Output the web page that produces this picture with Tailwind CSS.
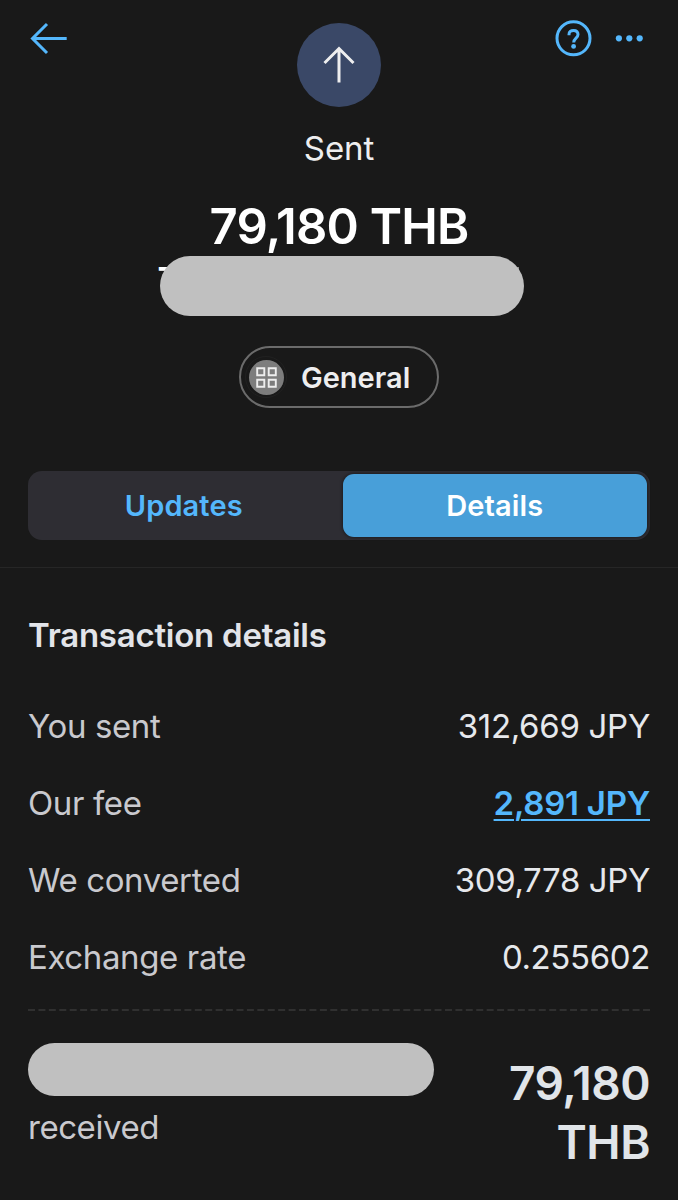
<!DOCTYPE html>
<html lang="en">
<head>
    <meta charset="UTF-8">
    <title>Transaction details</title>
    <script src="https://cdn.jsdelivr.net/npm/@tailwindcss/browser@4"></script>
</head>
<body class="bg-[#191919] font-['Inter',sans-serif]">
    <div class="relative w-[678px] h-[1200px] overflow-hidden flex flex-col">
        <!-- Header -->
        <header class="h-[107px] shrink-0 flex justify-between items-start px-7 pt-[18px]">
            <button class="w-[120px]">
                <svg class="block" width="42" height="40" viewBox="0 0 42 40" fill="none" stroke="#54b7fc" stroke-width="3">
                    <path d="M38.700 20.500H5M19 6L4.500 20.500L19 35"/>
                </svg>
            </button>
            <div class="mt-[5px] size-[84px] rounded-full bg-[#3a4867] flex items-center justify-center">
                <svg width="36" height="42" viewBox="0 0 36 42" fill="none" stroke="#eeeeef" stroke-width="3">
                    <path d="M18 38.500V5M3.500 19L18 4.500L32.500 19"/>
                </svg>
            </div>
            <div class="w-[120px] flex items-center justify-end">
                <svg width="96" height="40" viewBox="0 0 96 40" fill="none">
                    <circle cx="19.500" cy="20.300" r="16.500" stroke="#54b7fc" stroke-width="3"/>
                    <path d="M15 17.300V16.600C15 13.800 16.900 12.400 19.500 12.400C22.100 12.400 24 13.800 24 16.500C24 20.200 19.700 20.100 19.700 24.600" stroke="#54b7fc" stroke-width="3"/>
                    <circle cx="19.600" cy="28.400" r="2.400" fill="#54b7fc"/>
                    <g fill="#54b7fc">
                        <circle cx="64.900" cy="20.300" r="3.100"/>
                        <circle cx="75.300" cy="20.300" r="3.100"/>
                        <circle cx="85.700" cy="20.300" r="3.100"/>
                    </g>
                </svg>
            </div>
        </header>

        <!-- Summary -->
        <section class="flex flex-col items-center">
            <p class="mt-[21px] h-10 leading-10 text-[33px] tracking-[-0.1px] text-[#eeeeef]">Sent</p>
            <h1 class="mt-[29px] h-[59px] leading-[60px] text-[49px] font-semibold tracking-[-0.8px] text-white">79,180 THB</h1>
            <div class="relative h-[60px] w-[364px] ml-[5px]">
                <span class="absolute -left-[2px] top-[3px] leading-10 text-[33px] font-semibold text-white">T</span>
                <span class="absolute right-[5px] top-[11px] size-[3px] bg-[#8a8a8a]"></span>
                <div class="relative h-full rounded-full bg-[#c0c0c0]"></div>
            </div>
            <button class="mt-[30px] w-[200px] h-[62px] rounded-full border-2 border-[#6b6b6b] flex items-center pl-[4px]">
                <span class="size-[42px] rounded-full border border-[#212121] flex items-center justify-center">
                    <span class="size-[35px] rounded-full bg-[#7d7d7d] flex items-center justify-center">
                        <svg width="21" height="21" viewBox="0 0 21 21" fill="none" stroke="#eeeeee" stroke-width="1.900">
                            <path d="M1.200 1.200H8.300V8.300H1.200ZM12.700 1.200H19.800V8.300H12.700ZM1.200 12.700H8.300V19.800H1.200ZM12.700 12.700H19.800V19.800H12.700Z"/>
                        </svg>
                    </span>
                </span>
                <span class="ml-[14px] pt-[2px] text-[29px] leading-10 font-semibold text-[#eeeeef]">General</span>
            </button>
        </section>

        <!-- Tabs -->
        <nav class="mt-[63px] mx-7 h-[69px] shrink-0 rounded-[14px] bg-[#2e2d33] p-[3px] flex text-[29px] font-semibold tracking-[0.1px]">
            <button class="w-[311.5px] pt-px pr-[6px] text-[#54b7fc]">Updates</button>
            <button class="w-[304.5px] pt-px rounded-[11px] bg-[#489fd9] text-white shadow-[0_0_3px_1px_rgba(0,0,0,0.35)]">Details</button>
        </nav>

        <div class="mt-[27px] h-px shrink-0 bg-[#262626]"></div>

        <!-- Transaction details -->
        <section class="px-7">
            <h2 class="mt-[47px] h-10 leading-10 text-[33px] font-semibold tracking-[-0.25px] text-[#e2e4e9]">Transaction details</h2>
            <dl class="mt-[33px] text-[33px] leading-[77px] tracking-[-0.38px]">
                <div class="h-[77px] flex justify-between">
                    <dt class="text-[#c9c9ce]">You sent</dt>
                    <dd class="text-[#e6e8ec] tracking-[-0.3px]">312,669 JPY</dd>
                </div>
                <div class="h-[77px] flex justify-between">
                    <dt class="text-[#c9c9ce]">Our fee</dt>
                    <dd class="font-semibold tracking-[-0.25px] text-[#54b7fc] underline decoration-2 underline-offset-[4px]">2,891 JPY</dd>
                </div>
                <div class="h-[77px] flex justify-between">
                    <dt class="text-[#c9c9ce]">We converted</dt>
                    <dd class="text-[#e6e8ec]">309,778 JPY</dd>
                </div>
                <div class="h-[77px] flex justify-between">
                    <dt class="text-[#c9c9ce]">Exchange rate</dt>
                    <dd class="text-[#e6e8ec]">0.255602</dd>
                </div>
            </dl>
            <svg class="block mt-[13px]" width="622" height="2" viewBox="0 0 622 2">
                <path d="M0 1H622" stroke="#303030" stroke-width="2" stroke-dasharray="7 3.424"/>
            </svg>
            <div class="mt-[32px] flex justify-between">
                <div>
                    <div class="w-[406px] h-[53px] rounded-full bg-[#c0c0c0]"></div>
                    <p class="mt-[11px] leading-10 text-[33px] tracking-[-0.45px] text-[#c9c9ce]">received</p>
                </div>
                <p class="mt-[10.500px] w-[160px] text-right text-[46px] leading-[59px] font-semibold tracking-[-0.5px] text-[#e1e5e9]">79,180 THB</p>
            </div>
        </section>
    </div>
</body>
</html>
